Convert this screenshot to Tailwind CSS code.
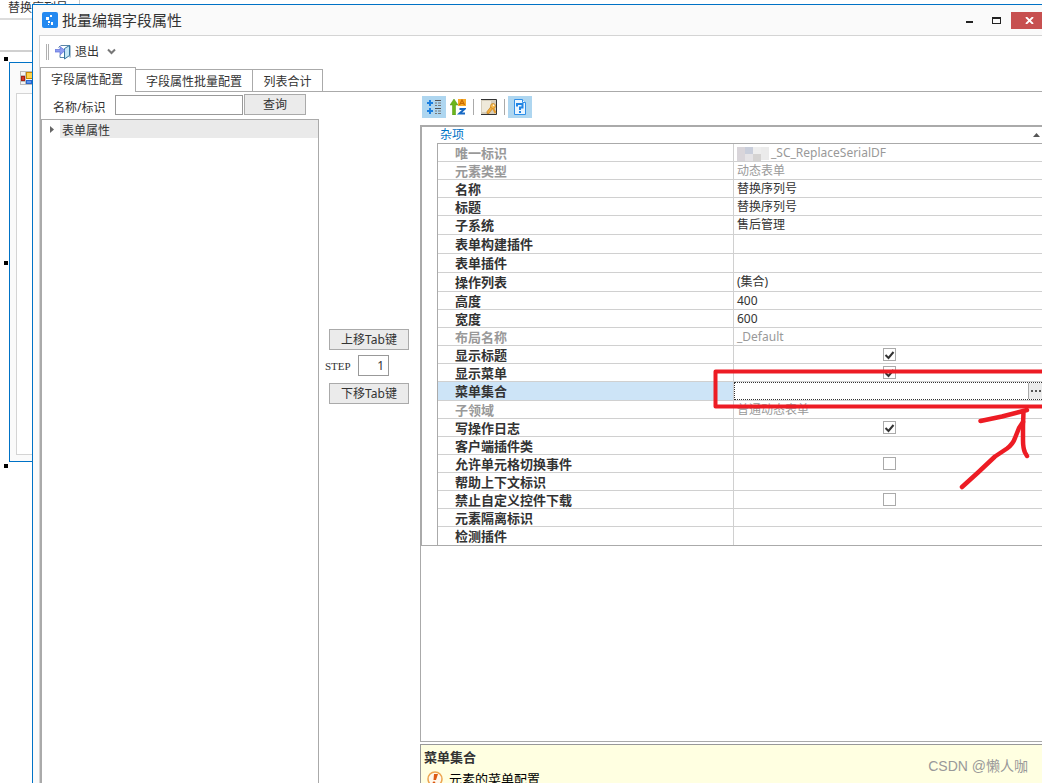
<!DOCTYPE html>
<html lang="zh-CN">
<head>
<meta charset="utf-8">
<title>批量编辑字段属性</title>
<script src="https://cdn.jsdelivr.net/npm/@tailwindcss/browser@4"></script>
</head>
<body class="relative h-screen overflow-hidden bg-white font-['Noto_Sans','Noto_Sans_CJK_SC',sans-serif] text-xs leading-4 text-[#333]">

<!-- Designer behind the dialog -->
<div class="absolute inset-0">
  <div class="flex h-5 border-b-2 border-[#dcdcdc]">
    <div class="w-20 border-r border-[#c8c8c8] pl-2 leading-4 whitespace-nowrap">替换序列号</div>
  </div>
  <div class="h-8 border-b-2 border-[#d0d0d0]"></div>
  <div class="absolute top-[57px] left-1 size-1 bg-black"></div>
  <div class="absolute top-[261px] left-1 size-1 bg-black"></div>
  <div class="absolute top-[464px] left-1 size-1 bg-black"></div>
  <div class="absolute top-[62px] left-[9px] flex h-[400px] w-80 flex-col border border-[#0072c6] bg-[#fafafa] pb-1.5 pl-1.5">
    <div class="h-[30px] pt-2 pl-1">
      <svg class="h-[15px] w-4" viewBox="0 0 16 15"><rect x=".5" y=".5" width="15" height="13" fill="#f4f4f4" stroke="#bbb"/><path d="M5.500 1v13M1 4.500h14M1 10.500h14" stroke="#bbb"/><rect x="1.500" y="5.500" width="3" height="4" fill="#d03a2a" stroke="#a81f12"/><rect x="6.500" y="1.500" width="8" height="6" fill="#ffd34d" stroke="#c98a00"/><rect x="6.500" y="9.500" width="5" height="3" fill="#5b95ee" stroke="#2c64c8"/></svg>
    </div>
    <div class="flex-1 border border-[#d4d4d4] bg-white"></div>
  </div>
</div>

<!-- Dialog -->
<main class="absolute top-1 right-0 bottom-0 left-8 flex flex-col border-t border-l border-[#0072c6] bg-[#fafafa]">
  <header class="flex h-[30px] shrink-0 items-center pl-[9px]">
    <svg class="size-4" viewBox="0 0 16 16"><rect width="16" height="16" rx="2" fill="#2489f0"/><path d="M8 3h2v2h-2zM4 5h3v3h-3zM6 9h2v2h-2zM9 10h2v3h-2zM6 12h1v1h-1z" fill="#fff"/></svg>
    <h1 class="flex-1 pl-1 text-[15px] leading-5">批量编辑字段属性</h1>
    <button class="flex h-[18px] w-[26px] items-center justify-center pr-0.5" aria-label="最小化"><svg class="h-2 w-[7px]" viewBox="0 0 7 8"><path d="M0 5h7v2H0z" fill="#222"/></svg></button>
    <button class="flex h-[18px] w-7 items-center justify-center pr-0.5" aria-label="最大化"><svg class="h-[7px] w-[9px]" viewBox="0 0 9 7"><path d="M0 0h9v7H0zM1 2v4h7V2z" fill="#222" fill-rule="evenodd"/></svg></button>
    <button class="flex h-[17px] w-[31px] items-center justify-center bg-[#c75050] pl-1.5" aria-label="关闭"><svg class="h-[7px] w-[9px]" viewBox="0 0 9 7"><path d="M1 0l7 7M8 0l-7 7" stroke="#fff" stroke-width="1.800"/></svg></button>
  </header>

  <div class="ml-1.5 flex min-h-0 flex-1 flex-col border-t border-l border-[#d4d4d4] bg-white">
    <!-- Toolbar -->
    <div class="flex h-[31px] shrink-0 items-center pl-1.5">
      <div class="h-4 w-[3px] border-x border-[#b0b0b0]"></div>
      <button class="ml-1.5 flex items-center gap-1">
        <svg class="size-4" viewBox="0 0 16 16"><path d="M6 1.500h9v12M3.500 3.500l2-2" fill="none" stroke="#5a86a8"/><path d="M9.500 4.500l5-3v10l-5 3.500z" fill="#c3e6f5" stroke="#35759f"/><path d="M0 5.500h5v-3l5 4-5 4.500v-3H0z" fill="#8d9cf0" stroke="#5f70d8" stroke-width=".7"/><path d="M5 11v2.500h4" fill="none" stroke="#5a86a8"/></svg>
        <span>退出</span>
      </button>
      <button class="ml-2 flex items-center" aria-label="更多"><svg class="h-[7px] w-[9px]" viewBox="0 0 9 7"><path d="M1 1.500l3.500 3.500 3.500-3.500" fill="none" stroke="#777" stroke-width="2"/></svg></button>
    </div>

    <!-- Tabs -->
    <nav class="flex h-[25px] shrink-0 items-end" role="tablist">
      <button role="tab" aria-selected="true" class="h-[25px] w-24 border-x border-t border-[#aaa] pr-0.5">字段属性配置</button>
      <button role="tab" class="h-[23px] w-[117px] border-y border-r border-[#aaa] pt-0.5">字段属性批量配置</button>
      <button role="tab" class="h-[23px] w-[70px] border-y border-r border-[#aaa] pt-0.5">列表合计</button>
      <div class="flex-1 border-b border-[#aaa]"></div>
    </nav>

    <div class="flex min-h-0 flex-1 border-l border-[#aaa]">
      <!-- Field tree -->
      <section class="flex w-[278px] shrink-0 flex-col">
        <form class="flex h-[27px] shrink-0 items-start pt-0.5 pl-3">
          <label for="q" class="w-[62px] pt-1.5">名称/标识</label>
          <input id="q" type="text" class="mt-px h-5 w-32 border border-[#999] bg-white px-1">
          <button type="button" class="ml-px h-[21px] w-[62px] border border-[#aaa] bg-[#ebebeb]">查询</button>
        </form>
        <div class="flex-1 border-x border-t border-[#aaa]">
          <div class="flex h-[18px] items-center">
            <svg class="mx-2 h-[7px] w-0.5 overflow-visible" viewBox="0 0 2 7"><path d="M0 0l4 3.500-4 3.500z" fill="#666"/></svg>
            <div class="h-[18px] flex-1 bg-[#eaeaea] pl-0.5 leading-[22px]">表单属性</div>
          </div>
        </div>
      </section>

      <!-- Reorder controls -->
      <section class="flex w-[101px] shrink-0 flex-col gap-[5px] pt-[237px] pl-1.5">
        <button class="ml-1 h-[21px] w-20 border border-[#aaa] bg-[#ebebeb]">上移Tab键</button>
        <div class="flex items-center">
          <label for="step" class="w-[33px] font-['Liberation_Serif',serif] text-[11px]">STEP</label>
          <input id="step" type="text" value="1" class="h-[21px] w-[31px] border border-[#999] pr-1 text-right">
        </div>
        <button class="mt-0.5 ml-1 h-[21px] w-20 border border-[#aaa] bg-[#ebebeb]">下移Tab键</button>
      </section>

      <!-- Property grid -->
      <section class="flex min-w-0 flex-1 flex-col">
        <div class="flex h-[33px] shrink-0 items-center pt-px pl-0.5 pb-1">
          <button class="flex h-[22px] w-6 items-center justify-center bg-[#aed6f0]" aria-label="分类"><svg class="size-4" viewBox="0 0 16 16"><path d="M1 4h6M4 1v6M1 12h6M4 9v6" stroke="#1b7fe0" stroke-width="2"/><path d="M9 1.500h6M9 9.500h6" stroke="#555"/><path d="M9 4h2M12 4h3M9 6.500h2M12 6.500h3M9 12h2M12 12h3M9 14.500h2M12 14.500h3" stroke="#777"/></svg></button>
          <button class="ml-1 flex size-4" aria-label="按字母排序"><svg class="size-4" viewBox="0 0 16 16"><path d="M2.500 16V6H0L4 0l4 6H5.500v10z" fill="#6cb51c" stroke="#4c9410" stroke-width=".5"/><path d="M8 0h8v7H8z" fill="#f7a928"/><path d="M9.500 6l2.500-5 2.500 5M10.500 4.500h3" fill="none" stroke="#c96a00" stroke-width="1.200"/><path d="M9.500 10h5l-5 4.500h5.500" fill="none" stroke="#1769c4" stroke-width="2"/></svg></button>
          <div class="ml-[7px] h-4 w-px bg-[#aaa]"></div>
          <button class="ml-[7px] flex size-4" aria-label="属性页"><svg class="size-4" viewBox="0 0 16 16"><path d="M0 .5h15.500v15H0z" fill="#d5cdbb"/><path d="M1 2h9v11H1z" fill="#efe9da"/><path d="M0 .5h15.500v15H0" fill="none" stroke="#333"/><path d="M10.500 7L6 12.500v2h2l1-1.500 3-4" fill="#f5ae3a" stroke="#ba7310" stroke-width=".6"/><circle cx="12" cy="7" r="2.500" fill="#f9bd52" stroke="#ba7310" stroke-width=".6"/><circle cx="12.600" cy="6.300" r=".8" fill="#fff"/><path d="M12 9l2.500 5" stroke="#e79b28" stroke-width="2"/></svg></button>
          <div class="mr-[3px] ml-[7px] h-4 w-px bg-[#aaa]"></div>
          <button class="flex h-[22px] w-6 items-center justify-center bg-[#aed6f0]" aria-label="帮助"><svg class="size-4" viewBox="0 0 16 16"><path d="M2.500.5h8l3 3v12h-11z" fill="#eaf5ff" stroke="#2f8fe8"/><path d="M10.500.5v3h3" fill="#fff" stroke="#2f8fe8"/><path d="M5 7.500V5h5.500v3.500H8V11M8 12v2" fill="none" stroke="#1f84e4" stroke-width="2"/></svg></button>
        </div>

        <div class="min-h-0 flex-1 border-y border-l border-[#aaa]">
          <div class="relative flex border-y border-l border-[#aaa]">
            <div class="w-[15px] shrink-0"></div>
            <div class="min-w-0 flex-1">
              <div class="flex h-4 items-center justify-between pr-0.5 pl-[3px] text-[#0072c6]">
                <span>杂项</span>
                <svg class="h-1 w-[7px]" viewBox="0 0 7 4"><path d="M0 4l3.500-4L7 4z" fill="#555"/></svg>
              </div>
              <table class="w-full table-fixed border-separate border-spacing-0 border-t border-l border-[#aaa] [&_td]:border-b [&_td]:border-[#d0d0d0] [&_td]:p-0 [&_td]:pl-[3px] [&_th]:border-r [&_th]:border-b [&_th]:border-[#d0d0d0] [&_th]:p-0 [&_th]:pl-[17px] [&_th]:text-left [&_th]:text-[13px] [&_tr:last-child>*]:border-b-0">
                <colgroup><col class="w-[296px]"><col></colgroup>
                <tbody>
                  <tr class="h-[18px] text-[#999]"><th scope="row">唯一标识</th><td><div class="flex items-center"><svg class="h-4 w-[34px]" viewBox="0 0 34 16"><path d="M0 2h8v14H0z" fill="#d9d5da"/><path d="M8 2h8v7H8z" fill="#c9cedb"/><path d="M16 2h8v7h-8z" fill="#eee"/><path d="M8 9h8v7H8z" fill="#e5e3e6"/><path d="M16 9h8v7h-8z" fill="#d5d3d2"/><path d="M24 2h8v13h-8z" fill="#ebebeb"/></svg><span>_SC_ReplaceSerialDF</span></div></td></tr>
                  <tr class="h-[18px] text-[#999]"><th scope="row">元素类型</th><td>动态表单</td></tr>
                  <tr class="h-[18px]"><th scope="row">名称</th><td>替换序列号</td></tr>
                  <tr class="h-[18px]"><th scope="row">标题</th><td>替换序列号</td></tr>
                  <tr class="h-[19px]"><th scope="row">子系统</th><td>售后管理</td></tr>
                  <tr class="h-[19px]"><th scope="row">表单构建插件</th><td></td></tr>
                  <tr class="h-[19px]"><th scope="row">表单插件</th><td></td></tr>
                  <tr class="h-[19px]"><th scope="row">操作列表</th><td>(集合)</td></tr>
                  <tr class="h-[18px]"><th scope="row">高度</th><td>400</td></tr>
                  <tr class="h-[18px]"><th scope="row">宽度</th><td>600</td></tr>
                  <tr class="h-[18px] text-[#999]"><th scope="row">布局名称</th><td>_Default</td></tr>
                  <tr class="h-[18px]"><th scope="row"><label for="c1">显示标题</label></th><td><div class="grid justify-center"><input id="c1" type="checkbox" checked class="peer col-start-1 row-start-1 size-[13px] appearance-none border border-[#aaa]"><svg class="pointer-events-none invisible col-start-1 row-start-1 size-[13px] peer-checked:visible" viewBox="0 0 13 13"><path d="M2.500 7l3 3 5-6" fill="none" stroke="#333" stroke-width="2"/></svg></div></td></tr>
                  <tr class="h-[18px]"><th scope="row"><label for="c2">显示菜单</label></th><td><div class="grid justify-center"><input id="c2" type="checkbox" checked class="peer col-start-1 row-start-1 size-[13px] appearance-none border border-[#aaa]"><svg class="pointer-events-none invisible col-start-1 row-start-1 size-[13px] peer-checked:visible" viewBox="0 0 13 13"><path d="M2.500 7l3 3 5-6" fill="none" stroke="#333" stroke-width="2"/></svg></div></td></tr>
                  <tr class="h-[19px]"><th scope="row" class="bg-[#cde4f7]"><label for="menu">菜单集合</label></th><td class="pl-0!"><div class="flex h-[18px] border-y border-l border-dotted border-[#333]"><input id="menu" type="text" class="min-w-0 flex-1 outline-none"><button class="flex w-3.5 items-center justify-center border-l border-[#aaa] bg-[#ebebeb]" aria-label="浏览"><svg class="h-0.5 w-2.5" viewBox="0 0 10 2"><path d="M0 0h2v2H0zM4 0h2v2H4zM8 0h2v2H8z" fill="#555"/></svg></button></div></td></tr>
                  <tr class="h-[18px] text-[#999]"><th scope="row">子领域</th><td>普通动态表单</td></tr>
                  <tr class="h-[18px]"><th scope="row"><label for="c3">写操作日志</label></th><td><div class="grid justify-center"><input id="c3" type="checkbox" checked class="peer col-start-1 row-start-1 size-[13px] appearance-none border border-[#aaa]"><svg class="pointer-events-none invisible col-start-1 row-start-1 size-[13px] peer-checked:visible" viewBox="0 0 13 13"><path d="M2.500 7l3 3 5-6" fill="none" stroke="#333" stroke-width="2"/></svg></div></td></tr>
                  <tr class="h-[18px]"><th scope="row">客户端插件类</th><td></td></tr>
                  <tr class="h-[18px]"><th scope="row"><label for="c4">允许单元格切换事件</label></th><td><div class="grid justify-center"><input id="c4" type="checkbox" class="size-[13px] appearance-none border border-[#aaa]"></div></td></tr>
                  <tr class="h-[18px]"><th scope="row">帮助上下文标识</th><td></td></tr>
                  <tr class="h-[18px]"><th scope="row"><label for="c5">禁止自定义控件下载</label></th><td><div class="grid justify-center"><input id="c5" type="checkbox" class="size-[13px] appearance-none border border-[#aaa]"></div></td></tr>
                  <tr class="h-[18px]"><th scope="row">元素隔离标识</th><td></td></tr>
                  <tr class="h-[18px]"><th scope="row">检测插件</th><td></td></tr>
                </tbody>
              </table>
            </div>
            <!-- Hand-drawn highlight and arrow -->
            <svg class="pointer-events-none absolute top-[241px] left-[290px] h-[124px] w-[332px]" viewBox="0 0 332 124" fill="none" stroke="#ed1c24" stroke-linecap="round" stroke-linejoin="round">
              <path d="M334 3.500H3.500V38.500H334" stroke-width="4"/>
              <path d="M250 119L266 104.500L283 88.500L295 80.500Q301 76 303 70L307 60L311 54" stroke-width="4.500"/>
              <path d="M268.500 53L290 48.500L315 42M311.500 43L311 58L311 72Q311 80 313 84.500L315 88" stroke-width="4.500"/>
            </svg>
          </div>
        </div>

        <div class="mt-0.5 h-[39px] shrink-0 overflow-hidden border-t border-l border-[#999] bg-[#ffffe1] pl-[3px]">
          <h2 class="pt-1 text-[13px] leading-4 font-bold">菜单集合</h2>
          <div class="flex items-start gap-1.5 pt-1.5 pl-[3px]">
            <svg class="size-4" viewBox="0 0 16 16"><circle cx="8" cy="8" r="7" fill="#fff8ec" stroke="#eda550" stroke-width="1.500"/><path d="M7 3h4L9 9H6.500z" fill="#dc5a14"/><circle cx="7" cy="12" r="1.400" fill="#dc5a14"/></svg>
            <p class="text-[13px] leading-4 text-black">元素的菜单配置</p>
          </div>
        </div>
      </section>
    </div>
  </div>
</main>

<div class="absolute right-3.5 bottom-[7px] font-['Liberation_Sans','Noto_Sans_CJK_SC',sans-serif] text-sm leading-5 text-[#999]">CSDN @懒人咖</div>
</body>
</html>
